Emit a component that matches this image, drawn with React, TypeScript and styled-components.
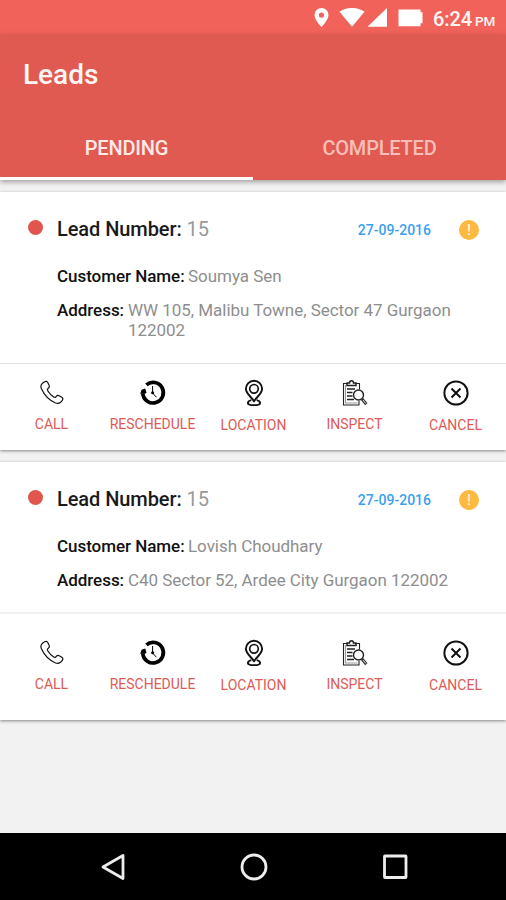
import { ReactNode } from 'react';
import styled, { createGlobalStyle } from 'styled-components';

type Lead = {
  id: number;
  leadNumber: string;
  date: string;
  customer: string;
  address: string;
  bodyHeight: number;
  actionsPadding: number;
  divider: string;
};

const LEADS: Lead[] = [
  {
    id: 1,
    leadNumber: '15',
    date: '27-09-2016',
    customer: 'Soumya Sen',
    address: 'WW 105, Malibu Towne, Sector 47 Gurgaon 122002',
    bodyHeight: 171,
    actionsPadding: 15,
    divider: '1px solid #e0e0e0',
  },
  {
    id: 2,
    leadNumber: '15',
    date: '27-09-2016',
    customer: 'Lovish Choudhary',
    address: 'C40 Sector 52, Ardee City Gurgaon 122002',
    bodyHeight: 150,
    actionsPadding: 25,
    divider: '2px solid #f1f1f1',
  },
];

const ACTIONS: { label: string; icon: ReactNode; gap: number }[] = [
  { label: 'CALL', icon: <CallIcon />, gap: 8 },
  { label: 'RESCHEDULE', icon: <RescheduleIcon />, gap: 8 },
  { label: 'LOCATION', icon: <LocationIcon />, gap: 9 },
  { label: 'INSPECT', icon: <InspectIcon />, gap: 8 },
  { label: 'CANCEL', icon: <CancelIcon />, gap: 9 },
];

export default function App() {
  return (
    <Screen>
      <GlobalStyle />
      <StatusBar />
      <Header>
        <Title>Leads</Title>
        <Tabs>
          <Tab $active>PENDING</Tab>
          <Tab>COMPLETED</Tab>
        </Tabs>
      </Header>
      <LeadList>
        {LEADS.map((lead) => (
          <LeadCard key={lead.id} lead={lead} />
        ))}
      </LeadList>
      <NavBar />
    </Screen>
  );
}

function StatusBar() {
  return (
    <StatusWrapper>
      <svg width="109" height="20" viewBox="0 0 109 20" fill="#fff">
        <path
          fillRule="evenodd"
          d="M7.5 0a7 7 0 0 0-7 7c0 5 7 12 7 12s7-7 7-12a7 7 0 0 0-7-7zm0 4.500a2.600 2.600 0 1 1 0 5.200 2.600 2.600 0 0 1 0-5.200z"
        />
        <path d="M25.500 3.800C33-1.300 43-1.300 50.500 3.800L38 18.800z" />
        <path d="M73 0V18.800H53.500z" />
        <path d="M84.500 1.600h22v2.600h2v11h-2v3h-22z" />
      </svg>
      <Clock>
        6:24<Meridiem>PM</Meridiem>
      </Clock>
    </StatusWrapper>
  );
}

function LeadCard({ lead }: { lead: Lead }) {
  return (
    <Card>
      <CardBody $height={lead.bodyHeight}>
        <TopRow>
          <Dot />
          <LeadNumber>
            Lead Number: <Light>{lead.leadNumber}</Light>
          </LeadNumber>
          <LeadDate>{lead.date}</LeadDate>
          <AlertBadge>!</AlertBadge>
        </TopRow>
        <Field>
          <FieldName $width={131}>Customer Name:</FieldName>
          <FieldValue>{lead.customer}</FieldValue>
        </Field>
        <Field>
          <FieldName $width={71}>Address:</FieldName>
          <FieldValue>{lead.address}</FieldValue>
        </Field>
      </CardBody>
      <Actions $top={lead.actionsPadding} $divider={lead.divider}>
        {ACTIONS.map(({ label, icon, gap }) => (
          <ActionButton key={label} $gap={gap}>
            {icon}
            {label}
          </ActionButton>
        ))}
      </Actions>
    </Card>
  );
}

function NavBar() {
  return (
    <NavWrapper>
      <svg width="28" height="30" viewBox="0 0 28 30">
        <path d="M24 3.500v23L4 15z" />
      </svg>
      <svg width="30" height="30" viewBox="0 0 30 30">
        <circle cx="15" cy="15" r="12" />
      </svg>
      <svg width="28" height="30" viewBox="0 0 28 30">
        <rect x="3.500" y="4" width="21.500" height="21.500" rx="0.500" />
      </svg>
    </NavWrapper>
  );
}

function CallIcon() {
  return (
    <svg width="28" height="28" viewBox="0 0 28 28" fill="none" stroke="#111" strokeWidth="1.2" strokeLinejoin="round">
      <path d="M6.600 2.800C7.700 2 8.900 2.200 9.600 3.300l1.500 3c.6 1 .4 2-.6 2.800-1.200.8-1.500 1.500-.8 2.700 1.700 2.800 3.600 4.700 6.100 6.300 1.100.7 1.900.4 2.600-.8.7-1.100 1.800-1.200 2.800-.6l2.600 1.500c1.200.8 1.400 1.900.6 3-1.700 2.800-4 3.800-6.900 2.800C11.500 21.500 6.300 16.200 3.200 9.300 2.200 6.500 4 4.200 6.600 2.800z" />
    </svg>
  );
}

function RescheduleIcon() {
  return (
    <svg width="28" height="28" viewBox="0 0 28 28" fill="none" stroke="#000">
      <path d="M7.400 5.800A10.300 10.300 0 1 1 3.800 14.500" strokeWidth="3.700" />
      <path d="M1.200 14.800h5.200l1-1.600-1.200-3.700-3.600 1.200z" fill="#000" stroke="none" />
      <path d="M13.600 7v7l3.800 4.200" strokeWidth="1" />
      <circle cx="13.600" cy="13.800" r="1.500" fill="#000" stroke="none" />
    </svg>
  );
}

function LocationIcon() {
  return (
    <svg width="28" height="28" viewBox="0 0 28 28" fill="none" stroke="#111" strokeWidth="1.900" strokeLinejoin="round">
      <path d="M14 22.300c-2-4-8.100-7.200-8.100-12.500a8.100 8.100 0 0 1 16.200 0c0 5.300-6.100 8.500-8.100 12.500z" />
      <circle cx="14" cy="9.800" r="4.300" strokeWidth="1.700" />
      <path d="M11.300 21.200c-2.200.6-3.400 1.500-3.400 2.700 0 1.500 2.700 2.200 6.100 2.200s6.100-.7 6.100-2.200c0-1.200-1.200-2.100-3.400-2.700" />
    </svg>
  );
}

function InspectIcon() {
  return (
    <svg width="28" height="28" viewBox="0 0 28 28" fill="none" stroke="#222" strokeWidth="1.100">
      <path d="M7 4.500H2.500v21.500h15.500v-4M14 4.500h4.500v6" />
      <path d="M4.500 6v18h12" stroke="#999" />
      <path d="M6 6.500v-2.500h2.500c0-3 4-3 4 0H15v2.500z" strokeWidth="1.500" />
      <path d="M6 10h8M6 13.500h5.500M6 17h5.500M6 20.500h7" strokeWidth="1.300" />
      <circle cx="17.500" cy="16" r="5" strokeWidth="1.400" />
      <path d="M21 20l4.300 5.200" strokeWidth="3" stroke="#333" />
      <path d="M22 21l2.800 3.500" strokeWidth="1" stroke="#ddd" />
    </svg>
  );
}

function CancelIcon() {
  return (
    <svg width="28" height="28" viewBox="0 0 28 28" fill="none" stroke="#111">
      <circle cx="14" cy="14" r="11.600" strokeWidth="2" />
      <path d="M9.500 9.500l9 9M18.500 9.500l-9 9" strokeWidth="2" />
    </svg>
  );
}

const GlobalStyle = createGlobalStyle`
  * {
    box-sizing: border-box;
  }

  body {
    margin: 0;
    font-family: Roboto, sans-serif;
  }
`;

const Screen = styled.div`
  display: flex;
  flex-direction: column;

  width: 506px;
  height: 900px;
  overflow: hidden;

  background: #f2f2f2;
`;

const StatusWrapper = styled.div`
  display: flex;
  justify-content: flex-end;
  align-items: center;
  flex-shrink: 0;

  height: 36px;
  padding-right: 10px;

  background: linear-gradient(#f1635a 80%, #e85e55);

  & > svg {
    margin-right: 10px;
  }
`;

const Clock = styled.div`
  display: flex;
  align-items: baseline;

  width: 63px;
  padding-top: 1px;

  color: #fff6f5;
  font-size: 20px;
  font-weight: 500;
  letter-spacing: -0.1px;
  white-space: nowrap;
`;

const Meridiem = styled.span`
  margin-left: 3px;

  font-size: 13.5px;
`;

const Header = styled.header`
  display: flex;
  flex-direction: column;
  justify-content: space-between;
  flex-shrink: 0;

  height: 144px;

  background: #e05a51;
  box-shadow: 0 2px 5px rgba(0, 0, 0, 0.35);
`;

const Title = styled.h1`
  margin: 0;
  padding: 23px 0 0 23px;

  color: #fff6f5;
  font-size: 28px;
  font-weight: 500;
  line-height: 32px;
`;

const Tabs = styled.div`
  display: grid;
  grid-template-columns: 1fr 1fr;
`;

const Tab = styled.div<{ $active?: boolean }>`
  height: 66px;
  padding-top: 21px;
  border-bottom: 3px solid ${({ $active }) => ($active ? '#ffffff' : 'transparent')};

  color: ${({ $active }) => ($active ? '#ffeae8' : '#f8bdb8')};
  font-size: 20px;
  font-weight: 500;
  letter-spacing: -0.2px;
  line-height: 26px;
  text-align: center;
`;

const LeadList = styled.main`
  display: flex;
  flex-direction: column;
  flex: 1;
  gap: 12px;

  padding-top: 12px;
`;

const Card = styled.section`
  display: flex;
  flex-direction: column;

  height: 258px;

  background: #ffffff;
  box-shadow: 0 1px 3px rgba(0, 0, 0, 0.45);
`;

const CardBody = styled.div<{ $height: number }>`
  height: ${({ $height }) => $height}px;
  padding: 22px 27px 0 28px;
`;

const TopRow = styled.div`
  display: flex;
  align-items: center;

  height: 30px;
  margin-bottom: 22px;
`;

const Dot = styled.span`
  width: 15px;
  height: 15px;
  margin: -4px 14px 0 0;
  border-radius: 50%;

  background: #e0564e;
`;

const LeadNumber = styled.div`
  flex: 1;

  color: #1a1a1a;
  font-size: 20px;
  font-weight: 500;
  letter-spacing: -0.08px;
`;

const Light = styled.span`
  color: #999999;
  font-weight: 400;
`;

const LeadDate = styled.time`
  margin-right: 28px;
  padding-top: 2px;

  color: #3a9ff0;
  font-size: 14px;
  font-weight: 500;
`;

const AlertBadge = styled.span`
  display: flex;
  justify-content: center;
  align-items: center;

  width: 20px;
  height: 20px;
  margin-top: 1px;
  border-radius: 50%;

  background: #fdb940;

  color: #fff3dc;
  font-size: 15px;
  font-weight: 500;
`;

const Field = styled.div`
  display: flex;

  margin: 0 20px 14px 29px;

  font-size: 17px;
  letter-spacing: -0.04px;
  line-height: 20px;
`;

const FieldName = styled.span<{ $width: number }>`
  flex: 0 0 ${({ $width }) => $width}px;

  color: #111111;
  font-weight: 500;
  white-space: nowrap;
`;

const FieldValue = styled.span`
  color: #8e8e8e;
`;

const Actions = styled.div<{ $top: number; $divider: string }>`
  display: grid;
  grid-template-columns: repeat(5, 1fr);
  flex: 1;

  padding: ${({ $top }) => $top}px 0 0 1px;
  border-top: ${({ $divider }) => $divider};
`;

const ActionButton = styled.button<{ $gap: number }>`
  display: flex;
  flex-direction: column;
  align-items: center;
  align-self: start;
  gap: ${({ $gap }) => $gap}px;

  padding: 0;
  border: none;

  background: none;

  color: #de5a55;
  font-family: inherit;
  font-size: 14px;
  line-height: 18px;
`;

const NavWrapper = styled.nav`
  display: flex;
  justify-content: center;
  align-items: center;
  gap: 112px;
  flex-shrink: 0;

  height: 67px;
  padding-left: 1px;

  background: #000000;

  & > svg {
    fill: none;
    stroke: #eeeeee;
    stroke-width: 2.800;
    stroke-linejoin: round;
  }
`;
